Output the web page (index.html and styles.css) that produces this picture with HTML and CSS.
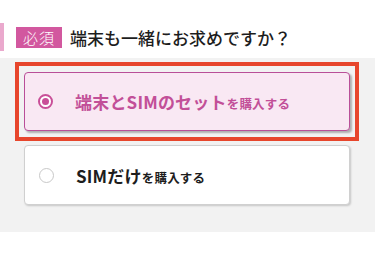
FILE: index.html
```html
<!DOCTYPE html>
<html lang="ja">
<head>
<meta charset="utf-8">
<link rel="stylesheet" href="styles.css">
</head>
<body>
<div class="head">
  <span class="edge"></span>
  <span class="badge">必須</span>
  <h2 class="title">端末も一緒にお求めですか？</h2>
</div>
<div class="options">
  <div class="focus">
    <label class="card card-on">
      <span class="radio radio-on"></span>
      <span class="label">端末とSIMのセット<small>を購入する</small></span>
    </label>
  </div>
  <label class="card card-off">
    <span class="radio"></span>
    <span class="label">SIMだけ<small>を購入する</small></span>
  </label>
</div>
<div class="after"></div>
</body>
</html>
```
FILE: styles.css
```css
* { box-sizing: border-box; }
html, body { margin: 0; padding: 0; background: #fff; }
body {
  font-family: "Noto Sans CJK JP", "Noto Sans", sans-serif;
  width: 375px;
  height: 255px;
  overflow: hidden;
}
.head {
  height: 58px;
  display: flex;
  align-items: center;
  padding-top: 16px;
}
.edge {
  width: 4px;
  height: 28px;
  background: #eaa9cd;
  margin-right: 12px;
}
.badge {
  width: 46px;
  height: 21px;
  background: #d2589f;
  color: #fff;
  font-size: 15px;
  line-height: 21px;
  text-align: center;
  letter-spacing: 1px;
  font-weight: 300;
}
.title {
  margin: 0 0 0 8px;
  font-size: 17px;
  font-weight: 500;
  color: #1d1d1d;
  letter-spacing: 0;
}
.options {
  background: #f2f2f2;
  padding: 4px 0 27px 15px;
  display: flex;
  flex-direction: column;
  gap: 4px;
}
.focus {
  width: 344px;
  border: 4px solid #e7462c;
  padding: 6px 7px 6px 5px;
}
.card {
  display: flex;
  align-items: center;
  height: 59px;
  width: 326px;
  border-radius: 4px;
  padding-left: 14px;
}
.card-on {
  background: #f9e8f3;
  border: 1.5px solid #b94f98;
  box-shadow: 2px 2px 2px rgba(0,0,0,0.28);
  color: #c24f98;
  padding-left: 13px;
}
.card-off {
  margin-left: 9px;
  height: 60px;
  background: #fff;
  border: 1px solid #d0d0d0;
  box-shadow: 1px 1px 2px rgba(0,0,0,0.18);
  color: #1d1d1d;
}
.radio {
  width: 15px;
  height: 15px;
  border-radius: 50%;
  border: 1.5px solid #c8c8c8;
  background: #fff;
  flex: none;
  position: relative;
}
.radio-on {
  border: 2px solid #c94f98;
  background: #fff;
}
.radio-on::after {
  content: "";
  position: absolute;
  left: 2px;
  top: 2px;
  width: 7px;
  height: 7px;
  border-radius: 50%;
  background: #c94f98;
}
.label {
  margin-left: 22px;
  font-size: 17px;
  font-weight: 700;
  letter-spacing: 0.2px;
}
.label small {
  font-size: 12.5px;
  font-weight: 700;
  letter-spacing: 0.2px;
}
```
